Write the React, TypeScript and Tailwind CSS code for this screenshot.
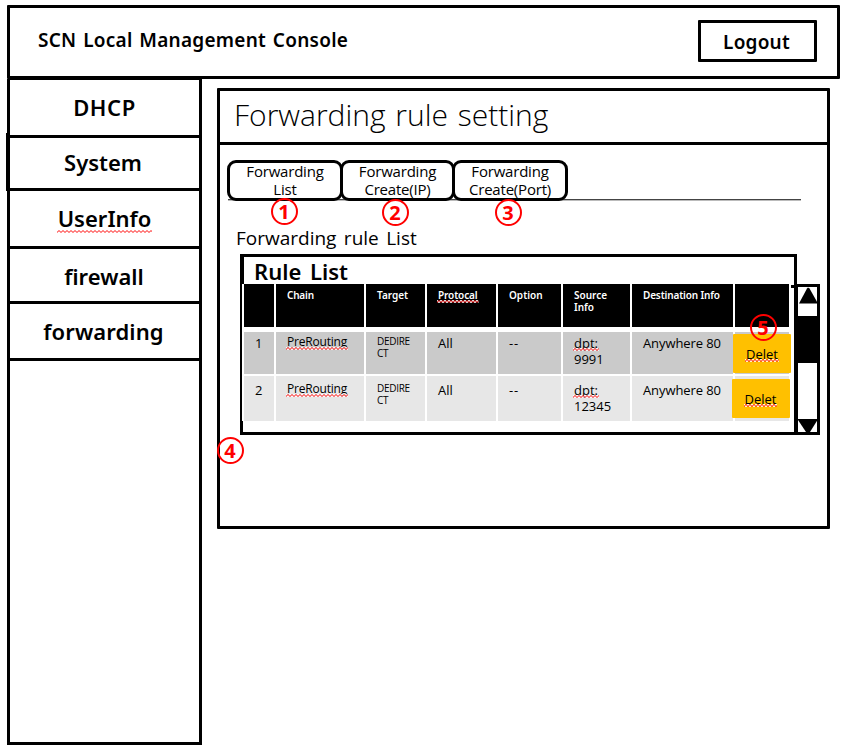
import type { ReactNode } from "react";

function Wavy({ id, children, halo = true, drop = "bottom-0" }: { id: string; children: ReactNode; halo?: boolean; drop?: string }) {
  return (
    <span className="relative inline-block">
      {children}
      <svg className={`absolute -right-px -left-px h-[3px] w-[calc(100%+2px)] ${drop}`} aria-hidden="true">
        <defs>
          <pattern id={id} width="4" height="3" patternUnits="userSpaceOnUse">
            {halo && <path d="M-1 -0.5 L0 0.5 L2 2.5 L4 0.5 L5 -0.5" fill="none" stroke="#fff" strokeWidth="1.2" />}
            <path d="M-1 3.5 L0 2.5 L2 0.5 L4 2.5 L5 3.5" fill="none" stroke="#f00" strokeWidth="1" />
          </pattern>
        </defs>
        <rect width="100%" height="3" fill={`url(#${id})`} />
      </svg>
    </span>
  );
}

function Marker({ n, className }: { n: number; className: string }) {
  return (
    <span
      className={`absolute z-20 flex h-[27px] w-[27px] items-center justify-center rounded-full border-2 border-[#f00] pr-px font-['Noto_Sans',sans-serif] text-[20px] leading-none font-bold text-[#f00] ${className}`}
    >
      {n}
    </span>
  );
}

const menu = "flex items-center justify-center border-b-[3px] border-black";
const tab =
  "relative z-10 flex h-[41px] items-center justify-center rounded-[9px] border-[3px] border-black bg-white pb-[2px] text-center text-[15px] leading-[18px] tracking-[-0.2px]";
const cols = "grid grid-cols-[30px_88px_59px_69px_63px_67px_101px_54px] gap-x-[2px]";
const head = "bg-black pl-[11px] pt-[5px]";

export default function App() {
  return (
    <div className="relative h-[750px] w-[846px] overflow-hidden bg-white pt-[5px] pl-[7px] font-['Open_Sans',sans-serif] text-black">
      <header className="flex h-[74px] w-[833px] items-start justify-between rounded-[1px] border-[3px] border-black pr-5 pl-7 font-['Noto_Sans',sans-serif] text-[19px] font-semibold">
        <h1 className="mt-[18px] leading-7 tracking-[0.25px] [word-spacing:1.6px]">SCN Local Management Console</h1>
        <button className="mt-3 flex h-[42px] w-[119px] items-center justify-center rounded-[1px] border-[3px] border-black pt-[2px] pr-[2px] tracking-[0.2px]">
          Logout
        </button>
      </header>

      <div className="flex items-start">
        <nav className="h-[666px] w-[195px] border-x-[3px] border-b-[3px] border-black font-['Noto_Sans',sans-serif] text-[22px] leading-[30px] font-semibold">
          <div className={`${menu} h-[59px] border-t pb-[2px] tracking-[0.6px]`}>DHCP</div>
          <div className={`${menu} relative h-[53px] pr-[3px] pb-[2px]`}>
            System
            <i className="absolute -top-[5px] -left-1 h-[58px] w-[3px] bg-black" />
          </div>
          <div className={`${menu} h-[58px] pb-[2px]`}>
            <Wavy id="w-user" halo={false}>UserInfo</Wavy>
          </div>
          <div className={`${menu} h-[55px] pr-px pt-px`}>firewall</div>
          <div className={`${menu} h-[57px] pr-[2px] tracking-[0.1px]`}>forwarding</div>
        </nav>

        <main className="mt-[9px] ml-[15px] h-[441px] w-[613px] rounded-[1px] border-[3px] border-black">
          <h2 className="h-[54px] border-b-[3px] border-black pl-[14px] text-[30px] leading-[48px] font-light [word-spacing:2px]">
            Forwarding rule setting
          </h2>

          <div className="mt-[15px] ml-[7px] flex">
            <div className={`${tab} w-[116px]`}>Forwarding<br />List</div>
            <div className={`${tab} -ml-[3px] w-[115px]`}>Forwarding<br />Create(IP)</div>
            <div className={`${tab} -ml-[3px] w-[116px]`}>Forwarding<br />Create(Port)</div>
          </div>
          <div className="-mt-[2px] ml-2 h-[2px] w-[573px] border-b border-[#bbb] bg-[#444]" />

          <h3 className="mt-[23px] h-[30px] pl-[16px] text-[19px] leading-7 [word-spacing:2.5px]">Forwarding rule List</h3>

          <div className="ml-5 flex">
            <section className="h-[181px] w-[557px] border-[3px] border-black">
              <h4 className="h-[27px] border-l border-black pl-[10px] font-['Noto_Sans',sans-serif] text-[22px] leading-[29px] font-semibold [word-spacing:3px]">
                Rule List
              </h4>
              <div className="relative -ml-px w-[548px] bg-white pl-[2px]">
                <div className={`${cols} h-[43px] font-['Noto_Sans',sans-serif] text-[10px] leading-3 font-semibold text-white`}>
                  <div className={head} />
                  <div className={`${head} tracking-[-0.2px]`}>Chain</div>
                  <div className={head}>Target</div>
                  <div className={`${head} tracking-[-0.1px]`}>
                    <Wavy id="w-protocal" drop="-bottom-[2px]">Protocal</Wavy>
                  </div>
                  <div className={head}>Option</div>
                  <div className={head}>Source<br />Info</div>
                  <div className={`${head} tracking-[-0.15px] whitespace-nowrap`}>Destination Info</div>
                  <div className={head} />
                </div>

                <div className={`${cols} mt-[5px] h-[42px] text-[13px] leading-4 *:bg-[#cacaca]`}>
                  <div className="pt-[3px] pl-[11px]">1</div>
                  <div className="pt-[2px] pl-[11px] text-[12px] tracking-[-0.2px]"><Wavy id="w-pre1">PreRouting</Wavy></div>
                  <div className="pt-[3px] pl-[11px] text-[10px] leading-3 tracking-[-0.3px]">DEDIRE<br />CT</div>
                  <div className="pt-[3px] pl-[11px]">All</div>
                  <div className="pt-[3px] pl-[11px] tracking-[0.8px]">--</div>
                  <div className="pt-[3px] pl-[11px]"><Wavy id="w-dpt1">dpt:</Wavy><br />9991</div>
                  <div className="pt-[3px] pl-[11px] tracking-[-0.1px] whitespace-nowrap">Anywhere 80</div>
                  <div>
                    <button className="relative mt-[2px] -ml-[2px] flex h-[39px] w-[58px] items-center justify-center rounded-[1px] bg-[#ffc000]">
                      <Wavy id="w-del1">Delet</Wavy>
                    </button>
                  </div>
                </div>

                <div className={`${cols} mt-[2px] h-[45px] text-[13px] leading-4 *:bg-[#e7e7e7]`}>
                  <div className="pt-[6px] pl-[11px]">2</div>
                  <div className="pt-[5px] pl-[11px] text-[12px] tracking-[-0.2px]"><Wavy id="w-pre2">PreRouting</Wavy></div>
                  <div className="pt-[6px] pl-[11px] text-[10px] leading-3 tracking-[-0.3px]">DEDIRE<br />CT</div>
                  <div className="pt-[6px] pl-[11px]">All</div>
                  <div className="pt-[6px] pl-[11px] tracking-[0.8px]">--</div>
                  <div className="pt-[6px] pl-[11px]"><Wavy id="w-dpt2">dpt:</Wavy><br />12345</div>
                  <div className="pt-[6px] pl-[11px] tracking-[-0.1px] whitespace-nowrap">Anywhere 80</div>
                  <div>
                    <button className="relative mt-[3px] -ml-[3px] flex h-[39px] w-[58px] items-center justify-center rounded-[1px] bg-[#ffc000] pr-px">
                      <Wavy id="w-del2">Delet</Wavy>
                    </button>
                  </div>
                </div>
              </div>
            </section>

            <div className="relative mt-[30px] -ml-[3px] flex h-[151px] w-[26px] flex-col border-[3px] border-l-4 border-black bg-white">
              <i className="absolute -top-[2px] -left-[7px] h-[3px] w-[3px] bg-black" />
              <svg className="h-[29px] w-[19px]" viewBox="0 0 19 29">
                <path d="M10 0.5 L11.5 1.5 L20 16.5 H1 L9 1.5 Z" fill="#000" />
              </svg>
              <div className="h-[47px] bg-black" />
              <svg className="mt-auto h-[13px] w-[19px]" viewBox="0 0 19 13">
                <path d="M0 0 H20 L12 13 H8 L0 1 Z" fill="#000" />
              </svg>
            </div>
          </div>
        </main>
      </div>

      <Marker n={1} className="top-[198px] left-[271px]" />
      <Marker n={2} className="top-[199px] left-[382px]" />
      <Marker n={3} className="top-[199px] left-[495px]" />
      <Marker n={4} className="top-[437px] left-[217px] pr-[2px]" />
      <Marker n={5} className="top-[314px] left-[750px]" />
    </div>
  );
}
